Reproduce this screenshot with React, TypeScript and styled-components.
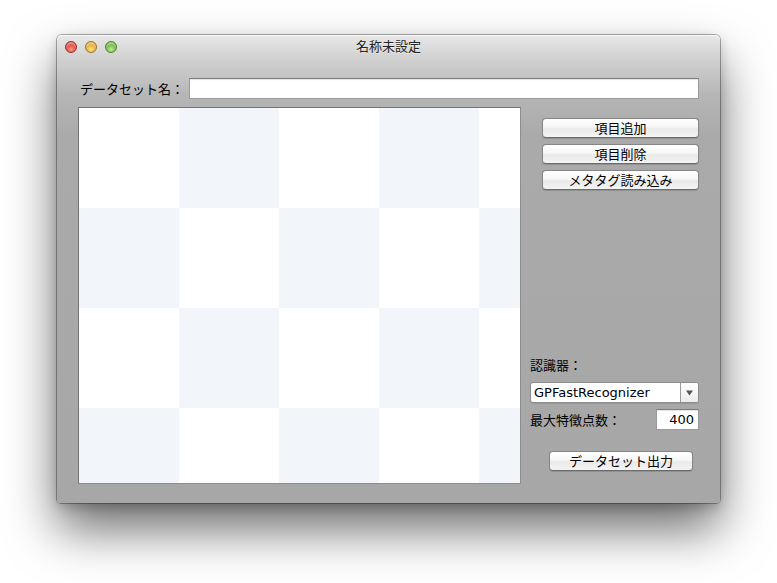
import React from 'react';
import styled, { createGlobalStyle } from 'styled-components';

const Global = createGlobalStyle`
  html, body { margin: 0; padding: 0; background: #ffffff; }
  body { font-family: "Noto Sans CJK JP", sans-serif; }
`;

const Desktop = styled.div`
  width: 777px;
  height: 583px;
  padding: 35px 0 0 57px;
  box-sizing: border-box;
  overflow: hidden;
`;

const Window = styled.div`
  width: 663px;
  height: 468px;
  border-radius: 5px 5px 4px 4px;
  background: linear-gradient(#e8e8e8 0px, #d2d2d2 22px, #b6b6b6 60px, #aaaaaa 100px, #a7a7a7 100%);
  box-shadow: 0 0 0 1px rgba(0, 0, 0, 0.3), 0 26px 50px rgba(0, 0, 0, 0.58), 0 4px 12px rgba(0,0,0,0.2);
  display: flex;
  flex-direction: column;
`;

const TitleBar = styled.div`
  height: 22px;
  display: grid;
  grid-template-columns: 1fr auto 1fr;
  align-items: center;
  border-radius: 5px 5px 0 0;
  box-shadow: inset 0 1px 0 rgba(255, 255, 255, 0.7);
`;

const Lights = styled.div`
  display: flex;
  gap: 8px;
  padding-left: 8px;
  padding-top: 1px;
`;

const Light = styled.div<{ $c1: string; $c2: string; $b: string }>`
  width: 12px;
  height: 12px;
  border-radius: 50%;
  box-sizing: border-box;
  border: 1px solid ${(p) => p.$b};
  background: radial-gradient(circle at 50% 75%, ${(p) => p.$c2} 0%, ${(p) => p.$c1} 70%);
  box-shadow: inset 0 2px 2px rgba(255, 255, 255, 0.55);
`;

const Title = styled.div`
  font-size: 13px;
  color: #222;
  line-height: 22px;
  text-shadow: 0 1px 0 rgba(255, 255, 255, 0.5);
`;

const Content = styled.div`
  flex: 1;
  display: flex;
  flex-direction: column;
  padding: 21px 21px 19px 21px;
`;

const NameRow = styled.div`
  height: 21px;
  display: flex;
  align-items: center;
`;

const Label = styled.div`
  font-size: 13px;
  color: #000;
  line-height: 18px;
  white-space: nowrap;
`;

const NameLabel = styled(Label)`
  flex: 1;
  padding-left: 2px;
`;

const TextField = styled.div<{ $w: number }>`
  width: ${(p) => p.$w}px;
  height: 21px;
  box-sizing: border-box;
  background: #fff;
  border: 1px solid #9a9a9a;
  border-top-color: #7c7c7c;
  box-shadow: inset 0 1px 1px rgba(0, 0, 0, 0.12);
  font-size: 13px;
  line-height: 19px;
  color: #000;
  text-align: right;
  padding-right: 4px;
  font-family: "DejaVu Sans", "Noto Sans CJK JP", sans-serif;
`;

const Main = styled.div`
  display: flex;
  margin-top: 8px;
  flex: 1;
`;

const Grid = styled.div`
  width: 443px;
  height: 377px;
  box-sizing: border-box;
  border: 1px solid #747474;
  border-right-color: #8d8d8d;
  border-bottom-color: #8d8d8d;
  background-color: #fff;
  background-image: repeating-conic-gradient(#f2f5fa 0 25%, #ffffff 0 50%);
  background-size: 200px 200px;
  background-position: 0 0;
`;

const Side = styled.div`
  width: 169px;
  margin-left: 9px;
  display: flex;
  flex-direction: column;
  justify-content: space-between;
  padding-bottom: 13px;
`;

const ButtonStack = styled.div`
  display: flex;
  flex-direction: column;
  gap: 6px;
  padding-top: 11px;
  padding-left: 12px;
`;

const PushButton = styled.div<{ $w: number }>`
  width: ${(p) => p.$w}px;
  height: 20px;
  box-sizing: border-box;
  border: 1px solid #858585;
  border-bottom-color: #6a6a6a;
  border-radius: 4px;
  background: linear-gradient(#ffffff 0%, #f6f6f6 45%, #e9e9e9 55%, #f4f4f4 100%);
  box-shadow: 0 1px 1px rgba(0, 0, 0, 0.14);
  display: flex;
  align-items: center;
  justify-content: center;
  font-size: 13px;
  color: #000;
  line-height: 18px;
`;

const Bottom = styled.div`
  display: flex;
  flex-direction: column;
`;

const Select = styled.div`
  margin-top: 8px;
  height: 21px;
  box-sizing: border-box;
  border: 1px solid #8c8c8c;
  border-radius: 3px;
  background: #fff;
  display: flex;
  box-shadow: 0 1px 1px rgba(0, 0, 0, 0.1);
`;

const SelectText = styled.div`
  flex: 1;
  font-family: "DejaVu Sans", sans-serif;
  font-size: 13px;
  line-height: 19px;
  padding-left: 3px;
  color: #000;
`;

const SelectArrow = styled.div`
  width: 17px;
  border-left: 1px solid #9a9a9a;
  background: linear-gradient(#ffffff, #ececec);
  border-radius: 0 2px 2px 0;
  display: flex;
  align-items: center;
  justify-content: center;
`;

const FieldRow = styled.div`
  margin-top: 6px;
  height: 21px;
  display: flex;
  align-items: center;
  justify-content: space-between;
`;

const ExportWrap = styled.div`
  margin-top: 21px;
  padding-left: 19px;
`;

export default function App() {
  return (
    <>
      <Global />
      <Desktop>
        <Window>
          <TitleBar>
            <Lights>
              <Light $c1="#d52d26" $c2="#f79b90" $b="#9c2a24" />
              <Light $c1="#dc9a16" $c2="#fce28a" $b="#a2721a" />
              <Light $c1="#58a82a" $c2="#c0ec9c" $b="#4b8325" />
            </Lights>
            <Title>名称未設定</Title>
            <div />
          </TitleBar>
          <Content>
            <NameRow>
              <NameLabel>データセット名：</NameLabel>
              <TextField $w={510} />
            </NameRow>
            <Main>
              <Grid />
              <Side>
                <ButtonStack>
                  <PushButton $w={157}>項目追加</PushButton>
                  <PushButton $w={157}>項目削除</PushButton>
                  <PushButton $w={157}>メタタグ読み込み</PushButton>
                </ButtonStack>
                <Bottom>
                  <Label>認識器：</Label>
                  <Select>
                    <SelectText>GPFastRecognizer</SelectText>
                    <SelectArrow>
                      <svg width="7" height="6" viewBox="0 0 7 6">
                        <path d="M0 0.5 L7 0.5 L3.5 5.5 Z" fill="#555" />
                      </svg>
                    </SelectArrow>
                  </Select>
                  <FieldRow>
                    <Label>最大特徴点数：</Label>
                    <TextField $w={43}>400</TextField>
                  </FieldRow>
                  <ExportWrap>
                    <PushButton $w={144}>データセット出力</PushButton>
                  </ExportWrap>
                </Bottom>
              </Side>
            </Main>
          </Content>
        </Window>
      </Desktop>
    </>
  );
}
